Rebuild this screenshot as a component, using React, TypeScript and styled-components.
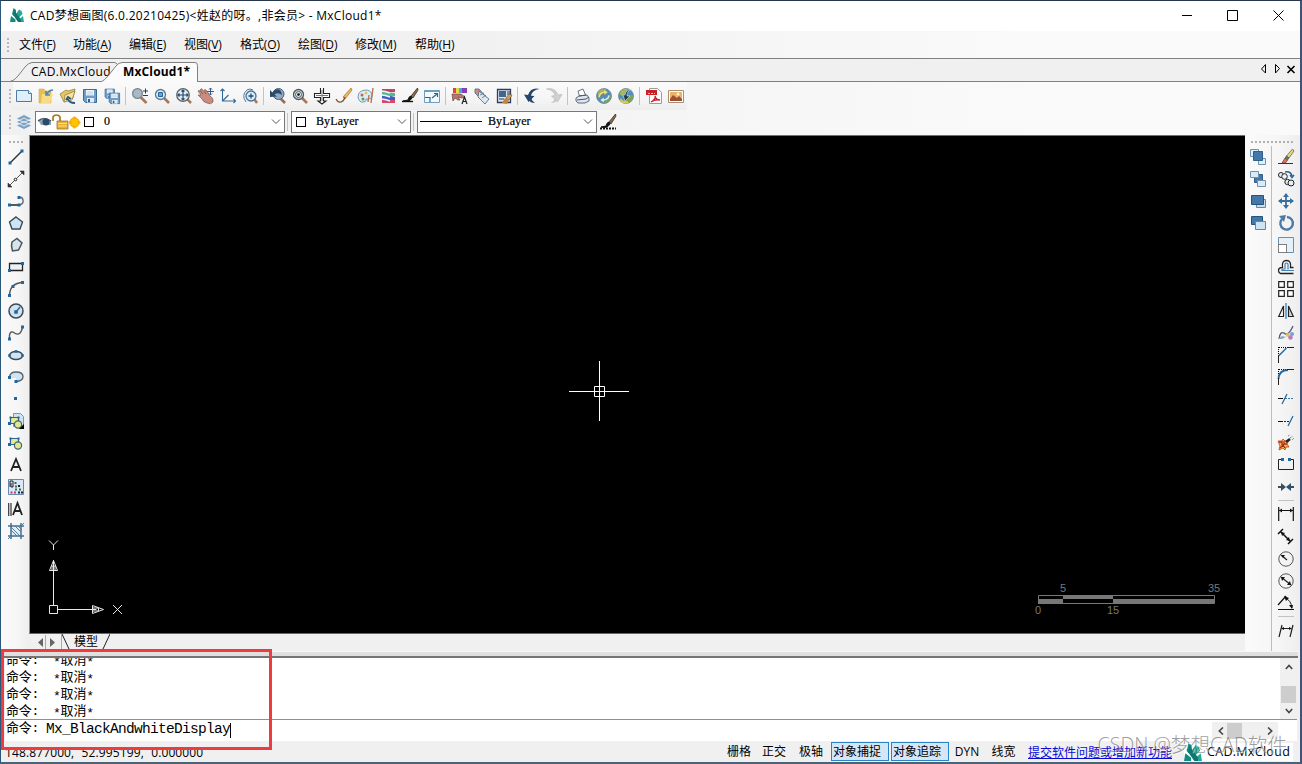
import React from "react";
import styled, { createGlobalStyle, css } from "styled-components";

const ui = `"Open Sans", "Noto Sans", "Noto Sans CJK SC", sans-serif`;
const cjk = `"Noto Sans", "Noto Sans CJK SC", sans-serif`;

const Global = createGlobalStyle`
  * { box-sizing: border-box; }
  body { margin: 0; overflow: hidden; background: #fff; }
`;

const Window = styled.div`
  position: relative;
  width: 1302px;
  height: 764px;
  display: flex;
  flex-direction: column;
  border: 1px solid #27374d;
  border-right: 2px solid #3f5277;
  border-left-color: #2b5878;
  border-bottom: 2px solid #4a6377;
  background: #f0f0f0;
  color: #000;
  font: 12px ${ui};
  overflow: hidden;
  white-space: nowrap;
`;

const TitleBar = styled.header`
  height: 30px;
  flex: none;
  display: flex;
  align-items: center;
  background: #fff;
  padding: 0 0 2px 9px;
`;
const Title = styled.h1<{ $track: number }>`
  margin: 0 auto 0 6px;
  font: 12px ${ui};
  letter-spacing: ${(p) => p.$track}px;
`;
const Caption = styled.button`
  width: 45.5px;
  height: 29px;
  border: 0;
  padding: 0;
  background: none;
  display: grid;
  place-items: center;
  svg { transform: translateX(1px); }
`;

const MenuBar = styled.nav`
  height: 27px;
  flex: none;
  display: flex;
  align-items: center;
  padding-left: 6px;
  background: linear-gradient(90deg, #f0f0f0, #f1f1f1 35%, #fafafa 80%);
`;
const MenuItem = styled.span<{ $w: number }>`
  width: ${(p) => p.$w}px;
  font: 12px ${ui};
  letter-spacing: -0.1px;
  padding-bottom: 1px;
  u { text-underline-offset: 2px; }
`;

const Grip = styled.span<{ $across?: boolean; $len: number }>`
  flex: none;
  ${(p) =>
    p.$across
      ? css`
          width: ${p.$len}px;
          height: 2px;
          background: repeating-linear-gradient(90deg, #b0b0b0 0 2px, transparent 2px 4px);
        `
      : css`
          width: 2px;
          height: ${p.$len}px;
          background: repeating-linear-gradient(180deg, #b8b8b8 0 2px, transparent 2px 4px);
        `}
`;

const TabStrip = styled.div`
  height: 24px;
  flex: none;
  display: flex;
  border-top: 1px solid #808080;
  background: #f0f0f0;
  box-shadow: inset 0 -1px #808080;
`;
const Tab = styled.div<{ $w: number; $pad: number; $overlap?: number; $active?: boolean }>`
  position: relative;
  width: ${(p) => p.$w}px;
  margin-left: ${(p) => p.$overlap ?? 0}px;
  padding: 4px 0 0 ${(p) => p.$pad}px;
  font: ${(p) => (p.$active ? "bold" : "normal")} 12px/17px ${ui};
  svg { position: absolute; left: 0; top: 0; }
  span { position: relative; letter-spacing: ${(p) => (p.$active ? 0.15 : 0.3)}px; }
`;
const TabControls = styled.div`
  margin-left: auto;
  padding: 2px 4px 0 0;
`;

const ToolRow = styled.div<{ $h: number; $lift?: number }>`
  height: ${(p) => p.$h}px;
  flex: none;
  display: flex;
  align-items: center;
  padding: 0 0 ${(p) => p.$lift ?? 0}px 8px;
  background: linear-gradient(90deg, #f1f1f1, #f4f4f4 45%, #fafafa 80%);
`;
const ToolSet = styled.div`
  display: flex;
  align-items: center;
  height: 100%;
  background: linear-gradient(180deg, #fafafa, #f5f5f5 60%, #ededed);
`;
const ToolButton = styled.button`
  width: 22px;
  height: 22px;
  flex: none;
  padding: 0;
  border: 0;
  background: none;
  display: grid;
  place-items: center;
  svg { display: block; overflow: visible; }
`;
const Divider = styled.i<{ $across?: boolean }>`
  flex: none;
  ${(p) =>
    p.$across
      ? "width:16px;height:1px;margin:2px 0 3px;"
      : "width:1px;height:18px;margin:0 3px 0 2px;"}
  background: #c3c3c3;
`;

const Combo = styled.div<{ $w: number }>`
  width: ${(p) => p.$w}px;
  height: 22px;
  flex: none;
  display: flex;
  align-items: center;
  border: 1px solid #777;
  background: #fff;
  padding: 0 3px 0 1px;
  font: 12px "Liberation Serif", serif;
  > svg:last-child { margin-left: auto; }
`;
const Swatch = styled.i<{ $gap: number }>`
  width: 10px;
  height: 10px;
  margin: 0 10px 0 ${(p) => p.$gap}px;
  border: 1px solid #000;
`;
const LinePreview = styled.i`
  width: 62px;
  height: 1px;
  margin: 0 6px 0 1px;
  background: #000;
`;
const Value = styled.span`
  letter-spacing: 0.1px;
  -webkit-text-stroke: 0.2px #000;
`;

const Main = styled.main`
  height: 516px;
  flex: none;
  display: flex;
`;
const SideBar = styled.aside<{ $w: number }>`
  width: ${(p) => p.$w}px;
  flex: none;
  display: flex;
  flex-direction: column;
  align-items: center;
  padding: 6px 0 0;
  background: linear-gradient(90deg, #fafafa, #f6f6f6 60%, #eee);
`;
const SideColumns = styled.div`
  display: flex;
  flex: 1;
  width: 100%;
`;
const Column = styled.div<{ $w: number; $line?: boolean }>`
  width: ${(p) => p.$w}px;
  display: flex;
  flex-direction: column;
  align-items: center;
  ${(p) => p.$line && "border-right:1px solid #bdbdbd;"}
`;
const Center = styled.section`
  flex: 1;
  display: flex;
  flex-direction: column;
`;
const Canvas = styled.div`
  height: 499px;
  position: relative;
  background: #000;
  border-top: 1px solid #707070;
  border-left: 1px solid #909090;
  border-bottom: 1px solid #686868;
`;
const Drawing = styled.svg<{ $x: number; $y: number }>`
  position: absolute;
  left: ${(p) => p.$x}px;
  top: ${(p) => p.$y}px;
  display: block;
  text { font: 11px "Liberation Sans", sans-serif; fill: #787878; }
`;
const SheetTabs = styled.div`
  height: 17px;
  display: flex;
  align-items: center;
  background: #f0f0f0;
  padding-left: 5px;
  font: 12px/15px ${cjk};
  span { padding-bottom: 2px; }
`;

const Splitter = styled.div`
  height: 7px;
  flex: none;
  margin: 0 2px 0 3px;
  background: #dfdfdf;
  border-top: 1px solid #f6f6f6;
  border-bottom: 2px solid #747474;
`;
const History = styled.div`
  height: 61px;
  flex: none;
  margin: 0 3px 0 4px;
  display: flex;
  background: #fff;
  overflow: hidden;
`;
const Lines = styled.div`
  flex: 1;
  margin-top: -6px;
  padding-left: 1px;
`;
const Line = styled.div`
  height: 17px;
  display: flex;
  font: 13px/17px "Liberation Mono", "Noto Sans CJK SC", monospace;
  letter-spacing: -0.2px;
`;
const Prompt = styled.span`
  width: 47px;
`;
const Star = styled.span`
  position: relative;
  top: 2px;
`;
const VScroll = styled.div`
  width: 17px;
  display: flex;
  flex-direction: column;
  align-items: center;
  justify-content: space-between;
  background: #f0f0f0;
  padding: 5px 0 4px;
`;
const Thumb = styled.i<{ $w: number; $h: number; $mt?: number }>`
  width: ${(p) => p.$w}px;
  height: ${(p) => p.$h}px;
  margin-top: ${(p) => p.$mt ?? 0}px;
  background: #cdcdcd;
`;
const CommandRow = styled.div`
  height: 22px;
  flex: none;
  margin: 0 3px 0 4px;
  display: flex;
  background: #fff;
  border-top: 1px solid #8f8f8f;
  padding-left: 1px;
`;
const CommandPrompt = styled.span`
  width: 40px;
  font: 13px/17px "Liberation Mono", "Noto Sans CJK SC", monospace;
  letter-spacing: -0.2px;
`;
const Command = styled.span`
  font: 14.5px/19px "Liberation Mono", monospace;
  letter-spacing: -0.7px;
`;
const Caret = styled.i`
  width: 1px;
  height: 15px;
  margin: 3px 0 0 0;
  background: #000;
`;
const HScroll = styled.div`
  width: 66px;
  height: 17px;
  margin: 2px 19px 0 auto;
  display: flex;
  align-items: center;
  padding: 0 5px;
  background: #f0f0f0;
`;

const StatusBar = styled.footer`
  flex: 1;
  display: flex;
  align-items: center;
  padding: 0 0 0 4px;
  font: 12px ${ui};
`;
const Coordinates = styled.span`
  width: 721px;
  letter-spacing: 0.12px;
  word-spacing: 4px;
  padding-top: 1px;
`;
const Toggle = styled.span<{ $w: number; $on?: boolean; $track?: number }>`
  width: ${(p) => p.$w}px;
  height: 19px;
  line-height: 17px;
  text-align: ${(p) => (p.$on ? "left" : "center")};
  padding-left: ${(p) => (p.$on ? 1 : 0)}px;
  letter-spacing: ${(p) => p.$track ?? 0}px;
  border: 1px solid ${(p) => (p.$on ? "#2a83c9" : "transparent")};
  background: ${(p) => (p.$on ? "#d5e7f6" : "transparent")};
  margin-right: ${(p) => (p.$on ? 2 : 0)}px;
`;
const Feedback = styled.a`
  margin-left: 4px;
  color: #0909d6;
  text-decoration: underline;
  text-underline-offset: 1px;
  width: 156px;
`;
const Brand = styled.span`
  display: flex;
  align-items: center;
  background: #fff;
  gap: 5px;
  padding-right: 3px;
  font-size: 12.5px;
  letter-spacing: 0.3px;
`;
const Highlight = styled.div`
  position: absolute;
  left: 0;
  top: 648px;
  width: 271px;
  height: 101px;
  border: 3px solid #ef3b3f;
`;
const Watermark = styled.div`
  position: absolute;
  right: 13px;
  bottom: 6px;
  font: 300 19.6px/23px "Open Sans", "Noto Sans CJK SC", sans-serif;
  color: rgba(110, 110, 110, 0.68);
  text-shadow: 1px 1px 0 rgba(255, 255, 255, 0.5);
`;

type P = { children: React.ReactNode; w?: number; h?: number };
const Icon = ({ children, w = 16, h = 16 }: P) => (
  <svg width={w} height={h} viewBox={`0 0 ${w} ${h}`} fill="none" stroke="#222" strokeWidth="1">
    {children}
  </svg>
);
const B = "#24669c";
const L = "#cfe3f3";
const Dots = ({ at, s = 3, c = B }: { at: number[][]; s?: number; c?: string }) => (
  <>
    {at.map(([x, y]) => (
      <rect key={`${x},${y}`} x={x - s / 2} y={y - s / 2} width={s} height={s} fill={c} stroke="none" />
    ))}
  </>
);
const Lens = ({ children, x = 6.5, y = 6.5, r = 5, c = "#5d7890" }: { children?: React.ReactNode; x?: number; y?: number; r?: number; c?: string }) => (
  <Icon>
    <path d={`M${x + r * 0.7} ${y + r * 0.7}L15 15`} stroke="#a9785b" strokeWidth="2.6" />
    <circle cx={x} cy={y} r={r} fill="#dcebf4" stroke={c} strokeWidth="1.3" />
    {children}
  </Icon>
);
const Logo = ({ s = 14 }: { s?: number }) => (
  <svg width={s} height={s} viewBox="0 0 14 14">
    <path d="M3.500 0 6 2v4L3.500 8 2 6zM1 8l4.500 3.500V14H0z" fill="#128b80" />
    <path d="M9 1.500 11.500 3l1 3-5 5L6 6zM13 8l1 6h-3.500L9 11.500z" fill="#20aa99" />
    <path d="m4 2 7 9.500V14H8L3.500 7.500z" fill="#0f776e" />
  </svg>
);
const Chevron = () => (
  <svg width="10" height="6" fill="none" stroke="#555">
    <path d="m1 .5 4 4 4-4" />
  </svg>
);
const Arrow = ({ d }: { d: "u" | "d" | "l" | "r" }) => (
  <svg width="8" height="8" fill="none" stroke="#444" strokeWidth="1.6">
    <path d={{ u: "m.8 6 3.2-3.5L7.2 6", d: "m.8 2 3.2 3.5L7.2 2", l: "M6 .5 2.3 4 6 7.5", r: "M2 .5 5.7 4 2 7.5" }[d]} />
  </svg>
);

const Floppy = ({ x = 0, y = 0, s = 1 }) => (
  <g transform={`translate(${x} ${y}) scale(${s})`}>
    <path d="M1.500 1.500h13v13h-11l-2-2z" fill="#6f9dc6" stroke="#356c9b" />
    <path d="M4 2h8v5.500H4z" fill="#eef5fb" stroke="none" />
    <path d="M5 4h6M5 6h6" stroke="#a9c4da" strokeWidth=".7" />
    <path d="M5 10h7v4.500H5z" fill="#e4edf5" stroke="none" />
    <path d="M6 11h2v3H6z" fill="#285f91" stroke="none" />
  </g>
);
const Globe = ({ flip }: { flip?: boolean }) => (
  <Icon>
    <circle cx="8" cy="8" r="7.500" fill="#4f8fbe" stroke="#6c8593" strokeWidth=".8" />
    <path d="M1.500 6Q4 0 10 1L7 5 4 8z" fill="#a8b95a" stroke="none" />
    <path d="M15 7q1 5-5 8l-5-1 4-3 3-4z" fill="#7ba457" stroke="none" />
    {flip ? (
      <>
        <path d="M3 10q2 4 6 3l2 2q-6 2-9-3z" fill="#e8c84f" stroke="none" />
        <path d="M14.500 1Q9 2 9 8h3l-5 5-2-6h2q1-6 7.500-6z" fill="#23384d" stroke="#e9eef2" strokeWidth=".6" />
      </>
    ) : (
      <>
        <path d="M2 9q0-5 6-6V1l4 3.500L8 7V5Q4 6 4 10z" fill="#f1dd7d" stroke="#8d8a52" strokeWidth=".5" />
        <path d="M14 7q0 5-6 6v2l-4-3 4-3v2q4-1 4-4z" fill="#d9ecf7" stroke="#577b90" strokeWidth=".5" />
      </>
    )}
  </Icon>
);
const Brush = ({ dots }: { dots?: boolean }) => (
  <Icon>
    <path d="m15.500 0-6.500 8 2 2 5-8z" fill="#866b4d" stroke="#3f332a" strokeWidth=".8" />
    <path d="M9 8q-2 0-3 4l-5 1q6 2 9-3z" fill="#161616" stroke="#161616" />
    <path d={dots ? "M0 14.500h16" : "M0 13.500h11"} stroke="#111" strokeWidth={dots ? 1.8 : 1.4} strokeDasharray={dots ? "2 1" : "none"} />
  </Icon>
);

const fileTools = [
  <Icon><path d="M.5 2.500h12l3 3v8H.5z" fill="#e0eef9" stroke="#4c7ca5" /><path d="M12.500 2.500v3h3" fill="#fff" stroke="#4c7ca5" /></Icon>,
  <Icon><path d="M1 1h5l1 2h6v12H1z" fill="#e9bd52" stroke="#d4a847" strokeWidth=".5" /><path d="M4 6h11l-3 9H3z" fill="#f7dc86" stroke="none" /><path d="M15 2q-4 0-6 4M8 3v4h4" stroke="#4c86b5" strokeWidth="1.6" /></Icon>,
  <Icon><path d="m0 6 6-4 2 1 7-2-2 9-9 4z" fill="#e6c75f" stroke="#8c7433" strokeWidth=".7" /><path d="m5 7 10-4-3 9-8 2z" fill="#f4e5a2" stroke="#8c7433" strokeWidth=".7" /><path d="M15 15q-6 0-7-4M6 12l2-3 3 2" stroke="#28587e" strokeWidth="1.8" /></Icon>,
  <Icon><Floppy /></Icon>,
  <Icon><Floppy s={0.72} /><Floppy x={4} y={4} s={0.8} /></Icon>,
];
const viewTools = [
  <Icon><path d="m8.500 9 6 6" stroke="#a9785b" strokeWidth="2.6" /><circle cx="5.500" cy="5.500" r="4.900" fill="#a9b9c5" stroke="#778895" strokeWidth="1.300" /><path d="M11 3h5M13.500.5v5M11 7.500h5" stroke="#263f57" /></Icon>,
  <Lens><path d="M4.500 4.500h4v4h-4z" fill="#6fa3cf" stroke={B} /></Lens>,
  <Lens x={7} y={7} r={6.3} c="#5b6168"><path d="M7 2v10M2 7h10M5.500 3.500 7 2l1.500 1.500M5.500 10.500 7 12l1.500-1.500M3.500 5.500 2 7l1.500 1.500M10.500 5.500 12 7l-1.500 1.500" stroke="#2e4a68" strokeWidth="1.200" /></Lens>,
  <Icon><path d="M0 3q1-1 2 0l3 3-3-4q1-2 2-1l4 5-2-4q2-1 3 1l3 5q4 2 3 6-2 3-6 1-4-1-5-4L0 7l3 0z" fill="#c98c80" stroke="#7e5951" strokeWidth=".7" /><path d="M12.500 0v7M9 3.500h7M11 1.500 12.500 0 14 1.500M11 5.500 12.500 7 14 5.500" stroke="#2f5d8c" /></Icon>,
  <Icon><path d="M2.500 1v12H16M.5 3l2-2 2 2M13.500 11l2 2-2 2M2.500 13l6-6" stroke="#356a97" strokeWidth="1.100" /></Icon>,
  <Lens x={9} y={8} r={5} c="#42749e"><path d="M6.500 8h5M9 5.500v5" stroke="#244d75" strokeWidth="1.300" /><path d="M5 2Q-1 7 4 14M5 2q3-2 6 0" stroke="#557892" /></Lens>,
];
const editTools = [
  <Icon><path d="m9 9 6 6" stroke="#9a6d52" strokeWidth="2.600" /><circle cx="8.500" cy="6" r="5.500" fill="#90abc0" stroke="#41607b" /><path d="M0 2v7l7-.5-2.500-2Q8 4 12 7 11 0 6 1.500 4 2 2.500 4.500z" fill="#2b4a6b" stroke="none" /></Icon>,
  <Lens c="#4d555c"><circle cx="6.500" cy="6.500" r="3" stroke="#555" /><circle cx="6.500" cy="6.500" r="1" fill="#222" /></Lens>,
  <Icon><path d="M6.500 0v5.500H.5v4h6V13H4l4 3 4-3H9.500V9.500h6v-4h-6V0" fill="#fff" stroke="#222" strokeWidth="1.100" /><path d="M8 2v11M2 7.500h12" stroke="#777" /></Icon>,
  <Icon><path d="m15 0-8 9 2 2 7-9z" fill="#f0b65d" stroke="#a36f38" strokeWidth=".7" /><path d="M0 11q2 4 5 3t4-5" stroke="#7d4f35" strokeWidth="1.200" /></Icon>,
  <Icon><path d="M9 2Q0 2 0 9q1 6 6 5 3-1 2-3 5 1 6-3 0-5-5-6z" fill="#deebf3" stroke="#6d9bbd" /><circle cx="4" cy="7" r="1.500" fill="#d65e50" stroke="none" /><circle cx="8" cy="5" r="1.300" fill="#e6bd3f" stroke="none" /><circle cx="5" cy="11" r="1.500" fill="#54a060" stroke="none" /><path d="m15 0-2 15M11 7l-1 7" stroke="#b87550" strokeWidth="1.400" /></Icon>,
  <Icon><path d="M2 1h13v3H2z" fill="#c54461" stroke="none" /><path d="M2 4q7 0 13 1v3H2z" fill="#5cb58c" stroke="none" /><path d="M2 8q7-1 13 1v3H2z" fill="#3b5fc0" stroke="none" /><path d="M2 12h13v3H2z" fill="#d8476a" stroke="none" /><path d="M1 3q4 0 9 2M1 7q4 0 9 2M1 11q4 0 9 2" stroke="#eef7ff" strokeWidth="1.500" /></Icon>,
  <Brush />,
  <Icon><path d="M.5 2.500h15v12H.5z" fill="#f4f9fc" stroke="#6e9fc1" /><path d="M.5 3.200h15" stroke="#6e9fc1" strokeWidth="1.600" /><path d="m8 10 5-4M10 5.500h3.500V9M1 9.500h5v4.500" stroke="#286998" strokeWidth="1.200" /></Icon>,
];
const matchTools = [
  <Icon><path d="M1 0h3v5H1z" fill="#e04141" stroke="none" /><path d="M4 0h3v5H4z" fill="#e5d94a" stroke="none" /><path d="M7 0h3v5H7z" fill="#4ba6da" stroke="none" /><path d="M10 0h5v5h-5z" fill="#873fb5" stroke="none" /><path d="m0 6 9 0 4 3-3 1-4-1 2 3-2 0-3-2-2 3z" fill="#b67770" stroke="#6b4540" strokeWidth=".7" /><path d="m10 16 2.500-7 2.500 7M11 13.500h3" stroke="#222" strokeWidth="1.200" /></Icon>,
  <Icon><path d="m1 1 4 0 8 9-4 3-8-8z" fill="#cb8d86" stroke="#4d6476" strokeWidth=".8" /><path d="m5 3 10 8-4 5-7-7z" fill="#dfe8ed" stroke="#47647b" strokeWidth=".8" /><path d="m6 7 4-2M8 10l4-3" stroke="#5a87a8" /></Icon>,
  <Icon><path d="M1.500 1.500h13v13h-13z" fill="#dce8f4" stroke="#2d3e60" strokeWidth="1.300" /><path d="M3 3h7v6H3z" fill="#42668c" stroke="none" /><path d="M11 4h3M11 6h3M3 11h5" stroke="#334" /><path d="m13 6 3 1-3 5-3-2z" fill="#d2a05e" stroke="#6d4e30" strokeWidth=".6" /><path d="m9 10 4 2-2 4-5-1z" fill="#c4823c" stroke="none" /></Icon>,
];
const undoTools = [
  <Icon><path d="M15.500 1Q7-1 4 7L0 6.500 4.500 14l6-6-3.500-.3Q8 2 15.500 1z" fill="#24466e" stroke="none" /><path d="M5 12q1 3 6 3-3-2-4-5z" fill="#24466e" stroke="none" /></Icon>,
  <Icon><path d="M.5 1Q9-1 12 7l4-.5L11.500 14l-6-6 3.500-.3Q8 2 .5 1z" fill="#d0d0d0" stroke="#b3b3b3" strokeWidth=".6" /><path d="M11 12q-1 3-6 3 3-2 4-5z" fill="#c8c8c8" stroke="none" /></Icon>,
];
const webTools = [
  <Icon><path d="m4 3 5-2 3 7-6 2z" fill="#fff" stroke="#52647b" strokeWidth=".9" /><path d="m2 10 3-2 8-1 2 3v3l-4 2H4l-2-2z" fill="#dfe5ed" stroke="#4b5b75" strokeWidth=".9" /><path d="m3 12 9-1 3-2M5 8l7-1" stroke="#4b5b75" /></Icon>,
  <Globe />,
  <Globe flip />,
];
const exportTools = [
  <Icon><path d="M3.500.5h8l4 4v11h-12z" fill="#fff" stroke="#9c9c9c" /><path d="M0 2h11v5H0z" fill="#c91f25" stroke="none" /><path d="M2 5.500h7" stroke="#f1b4b4" strokeWidth="1" strokeDasharray="2 1" /><path d="M5 14q5-3 4-6 1 4 5 4-5-1-9 2z" stroke="#c91f25" strokeWidth="1.300" /></Icon>,
  <Icon><path d="M.5 2.500h15v12H.5z" fill="#fff" stroke="#a88c78" /><path d="M2 4h12v9H2z" fill="#ebb26b" stroke="none" /><path d="m2 11 3-4 4 3 2-2 3 3v2H2z" fill="#9c5032" stroke="none" /><circle cx="10" cy="6" r="1.500" fill="#fff3bd" stroke="none" /></Icon>,
];

const Region = () => (
  <>
    <path d="M2.500 3.500h8v6h-8z" fill="#e8ec8b" stroke={B} strokeWidth="1.200" />
    <circle cx="10" cy="10.500" r="3.600" fill="#dde893" stroke="#48616f" strokeWidth="1.200" />
    <Dots at={[[1.500, 9.5]]} s={3} />
    <Dots at={[[2.5, 3.5], [10.5, 3.5]]} s={2} />
  </>
);
const drawTools = [
  <Icon><path d="m2 14 12-12" stroke="#333" strokeWidth="1.500" /><Dots at={[[2, 14], [14, 2]]} /></Icon>,
  <Icon><path d="m1 15 14-14" stroke="#555" /><path d="M0 16v-4l4 4zM16 0v4l-4-4z" fill="#333" stroke="#333" strokeWidth=".6" /><circle cx="7.500" cy="8.500" r="1.300" fill="#fff" /></Icon>,
  <Icon><path d="M2 12h9" stroke="#222" strokeWidth="1.500" /><path d="M11 12q5-1 4-5t-4-2" stroke="#667" strokeWidth="1.400" /><Dots at={[[1.5, 12], [11, 12], [11, 4.5]]} /></Icon>,
  <Icon><path d="m8 2 6.500 5-2.500 7H4L1.500 7z" fill={L} stroke="#3c4a54" strokeWidth="1.400" /></Icon>,
  <Icon><path d="m4 5 5-3.500 5 4.500-3.500 7-6 1-1-5z" fill="#d7e4eb" stroke="#4d565c" strokeWidth="1.500" /></Icon>,
  <Icon><path d="M1.500 4.500h13v7h-13z" fill="#eaf2f7" stroke="#222" strokeWidth="1.300" /><Dots at={[[1.5, 11.5], [14.5, 4.5]]} /></Icon>,
  <Icon><path d="M1.500 14Q2 2 15 1.500" stroke="#555" strokeWidth="1.400" /><Dots at={[[1.5, 14.5], [5, 5.5], [14.500, 1.5]]} /></Icon>,
  <Icon><circle cx="8" cy="8" r="7" fill={L} stroke="#3d4a54" strokeWidth="1.500" /><path d="m8 9 4-5" stroke={B} strokeWidth="1.300" /><Dots at={[[8, 9]]} s={3.5} /></Icon>,
  <Icon><path d="M1.500 14V10q1-5 5-2 6 4 8-6" stroke="#555" strokeWidth="1.400" /><Dots at={[[1.5, 14], [14.500, 2]]} /></Icon>,
  <Icon><ellipse cx="8" cy="8.500" rx="6.500" ry="4" fill={L} stroke="#3d4a54" strokeWidth="1.400" /><Dots at={[[1.5, 8.5], [14.500, 8.5], [8, 4.5]]} s={2.6} /></Icon>,
  <Icon><path d="M1.500 8Q2 3 8 3q7 0 7 4.500t-7 5V9H1.500z" fill={L} stroke="none" /><path d="M1.500 8Q2 3 8 3q7 0 7 4.500t-7 5" stroke="#59656d" strokeWidth="1.400" /><Dots at={[[1.5, 8.5], [8, 12.5]]} /></Icon>,
  <Icon><Dots at={[[7.5, 7.5]]} /></Icon>,
  <Icon><path d="M5.500.5h7l3 3v10h-10z" fill={L} stroke="#7396bd" /><g transform="translate(0 1)"><Region /></g><path d="m16 11v5h-5z" fill="#000" stroke="none" /></Icon>,
  <Icon><Region /></Icon>,
  <Icon><path d="m3 14 5-12 5 12M5 10h6" stroke="#222" strokeWidth="1.800" /></Icon>,
  <Icon><path d="M.5.500h15v15H.5z" fill="#dbe7f8" stroke="#6687b2" /><path d="M2 8V2h3v6H3V4" stroke="#222" /><Dots at={[[7.5, 4]]} s={2} c="#27754d" /><Dots at={[[8, 7.5], [8, 10.5], [12, 10.5]]} s={2} c="#277458" /><Dots at={[[3.5, 13.5], [7, 13.5]]} s={2} c="#c64141" /><Dots at={[[11, 7], [11, 13.5], [14, 13.5]]} s={2} c="#222" /></Icon>,
  <Icon><path d="M.7 2v13M3 2v13" stroke="#333" strokeWidth="1.200" /><path d="m5 14 4.500-12L14 14M6.500 10h6" stroke="#222" strokeWidth="1.800" /></Icon>,
  <Icon><path d="M3 0v16M13 0v16M0 3h16M0 13h16" stroke="#456d8d" strokeWidth="1.500" /><path d="M4 4h8v8H4z" fill="#e0eff6" stroke="none" /><path d="m3 7 6 6M3 4l9 9M7 3l6 6M10 3l4 4M0 16l3-3M13 3l3-3" stroke="#527f9d" /></Icon>,
];

const orderTools = [
  <Icon><path d="M.5.500h8v7h-8zM8.500 9.500h7v6h-7z" fill="#e0eef7" stroke="#6c94b2" /><path d="M3.500 2.500h9v9h-9z" fill="#4578aa" stroke="#315f8a" /></Icon>,
  <Icon><path d="M4.500 3.500h8v8h-8z" fill="#4578aa" stroke="#315f8a" /><path d="M.5.500h8v6h-8zM7.500 9.500h8v6h-8z" fill="#dceaf5" stroke="#6c94b2" /></Icon>,
  <Icon><path d="M6.500 6.500h9v8h-9z" fill="#c8dded" stroke="#6089aa" /><path d="M1.500 2.500h12v9h-12z" fill="#4578aa" stroke="#285379" /></Icon>,
  <Icon><path d="M1.500 1.500h11v8h-11z" fill="#4578aa" stroke="#285379" /><path d="M5.500 6.500h10v8h-10z" fill="#cfe4f3" stroke="#5b88ac" /></Icon>,
];
const modifyTools = [
  <Icon><path d="M0 14.500h15" stroke="#333" /><path d="m14.500 0-6 7 2.500 2 5-7z" fill="#ead582" stroke="#70643a" strokeWidth=".8" /><path d="m8.500 7-1.500 2 2.500 2L11 9z" fill="#4b8a68" stroke="#345" strokeWidth=".6" /><path d="m7 9 2.500 2-2 3H4z" fill="#e0705e" stroke="#77362d" strokeWidth=".7" /></Icon>,
  <Icon><circle cx="3" cy="4" r="2.500" fill="#edf3f6" /><circle cx="6.500" cy="5.500" r="2.800" fill="#edf3f6" /><circle cx="9.500" cy="11" r="2.700" fill="#e3eef4" /><circle cx="13" cy="12" r="3" fill="#e3eef4" /><path d="M7 1q6-1 7 4m-2-1 2 2.500 2-2.500" stroke={B} strokeWidth="1.500" /></Icon>,
  <Icon><path d="M8 1v14M1 8h14" stroke="#396f9e" strokeWidth="1.800" /><path d="m8 0 3 4H5zM8 16l-3-4h6zM0 8l4-3v6zM16 8l-4 3V5z" fill="#396f9e" stroke="none" /></Icon>,
  <Icon><path d="M4 4a6.300 6.300 0 1 0 5-2" stroke="#4b7ba5" strokeWidth="2.400" /><path d="m1 1 7-1-2 7z" fill="#4b7ba5" stroke="none" /></Icon>,
  <Icon><path d="M.5.500h15v15H.5z" fill="#e5f0f8" stroke="#6490b4" /><path d="M.5 7.500h8v8h-8z" fill="#fff" stroke="#fff" /><path d="M.5 7.500h8v8h-8z" stroke="#000" strokeDasharray="1 1" /></Icon>,
  <Icon><path d="M15.500 14.500H2.500q-2-1-2-3 0-3 4-3-1-7 4-7t4 7h3" stroke="#222" strokeWidth="1.300" /><path d="M16 11.500H4q-1-1 2-1.500h1V5q1.500-2 3 0v5.500" stroke="#4383b5" strokeWidth="1.200" /></Icon>,
  <Icon><path d="M.7.700h5.600v5.600H.7zM9.700.700h5.600v5.600H9.700zM.7 9.700h5.600v5.600H.7zM9.700 9.700h5.600v5.600H9.700z" fill="#fff" stroke="#222" strokeWidth="1.200" /></Icon>,
  <Icon><path d="M.7 13.500 5.500 3v10.500z" fill="#fff" strokeWidth="1.200" /><path d="m10.500 3 4.800 10.500h-4.800z" fill="#ccd8e4" strokeWidth="1.200" /><path d="M8 0v16" stroke="#2d83b8" strokeWidth="1.300" /></Icon>,
  <Icon><path d="M1 14q1-8 5-6 4 4 9-7" stroke="#557" strokeWidth="1.300" /><path d="m0 14 4-3 4 1-4 2z" fill="#88a8bd" stroke="none" /><circle cx="10" cy="10" r="2" fill="#e6c157" stroke="none" /><circle cx="14" cy="9" r="2" fill="#789fd6" stroke="none" /><circle cx="12.500" cy="12.500" r="2.300" fill="#b57bc6" stroke="none" /></Icon>,
  <Icon><path d="M1 .5h15M.5 0v10" stroke="#000" strokeDasharray="1 1" /><path d="m.5 9 8-8" stroke={B} strokeWidth="1.500" /><path d="M.5 9v7M9 .5h7" stroke="#222" /></Icon>,
  <Icon><path d="M1 .5h15M.5 0v10" stroke="#000" strokeDasharray="1 1" /><path d="M.5 10Q1 1 10 1" stroke={B} strokeWidth="1.900" /><path d="M.5 9v7M9 .5h7" stroke="#222" /></Icon>,
  <Icon><path d="M0 7.500h5" stroke="#111" /><path d="M7 7.500h9" stroke="#4375a2" strokeDasharray="2 1" /><path d="m4 13 5-10" stroke={B} strokeWidth="1.200" /></Icon>,
  <Icon><path d="M0 8.500h5" stroke="#111" /><path d="M6 8.500h6" stroke="#222" strokeDasharray="2 1" /><path d="m10 13 5-10" stroke={B} strokeWidth="1.200" /></Icon>,
  <Icon><path d="m0 6 4 0 1-2 2 2 4-1-2 4 2 3-3 0-1 3-2-2-4 2 1-4z" fill="#f4bd3a" stroke="#c9472e" strokeWidth=".9" /><path d="M1 7h3v3M6 6v3h3M2 13l3-3 2 3" stroke="#a33021" strokeWidth="1.300" /><path d="m8 7 4-3" stroke="#222" strokeWidth="2.600" /><path d="m12 3 3-2M14 5l2-2M10 1l2-1" stroke="#5177aa" strokeDasharray="1 .8" /></Icon>,
  <Icon><path d="M4 2.500H.5v10h15v-10H12" fill="none" stroke="#222" /><Dots at={[[4.500, 2.500], [11.500, 2.500]]} /></Icon>,
  <Icon><path d="M0 8h5M11 8h5" stroke="#111" strokeWidth="1.400" /><path d="m3 4 5 4-5 4zM13 4 8 8l5 4z" fill="#2d526e" stroke="none" /></Icon>,
];
const dimensionTools = [
  <Icon><path d="M.7 0v14M15.300 0v14M1 3.500h14" stroke="#111" strokeWidth="1.200" /><path d="m1 3.500 3-2v4zM15 3.500l-3-2v4z" fill="#111" stroke="none" /></Icon>,
  <Icon><path d="m0 5 5-5M10 15l5-5M3 3l9 9" stroke="#111" strokeWidth="1.500" /><path d="m3 3 4 1-3 3zM12 12l-4-1 3-3z" fill="#111" stroke="none" /></Icon>,
  <Icon><circle cx="8" cy="8" r="7.200" stroke="#555" /><path d="m3 4 6 5" strokeWidth="1.300" /><path d="m3 4 4 0-2 3z" fill="#111" stroke="none" /></Icon>,
  <Icon><circle cx="8" cy="8" r="7.200" stroke="#555" /><path d="m3 4 10 8" strokeWidth="1.300" /><path d="m3 4 4 0-3 4zM13 12l-4 0 3-4z" fill="#111" stroke="none" /></Icon>,
  <Icon><path d="M0 14.500h16M0 10l8-9" stroke="#111" strokeWidth="1.200" /><path d="M7 3q6 2 7 10" /><path d="m6 1 5 2-3 3zM14 14l-3-4h4z" fill="#111" stroke="none" /></Icon>,
];

const Tools = ({ icons }: { icons: React.ReactNode[] }) => (
  <>
    {icons.map((icon, i) => (
      <ToolButton key={i}>{icon}</ToolButton>
    ))}
  </>
);

const menus: [string, string, number][] = [
  ["文件", "F", 54],
  ["功能", "A", 56],
  ["编辑", "E", 55],
  ["视图", "V", 56],
  ["格式", "O", 58],
  ["绘图", "D", 57],
  ["修改", "M", 60],
  ["帮助", "H", 60],
];
const toolGroups = [fileTools, viewTools, editTools, matchTools, undoTools, webTools, exportTools];

export default function App() {
  return (
    <Window>
      <Global />
      <TitleBar>
        <Logo />
        <Title $track={0.27}>CAD梦想画图(6.0.20210425)&lt;姓赵的呀。,非会员&gt; - MxCloud1*</Title>
        <Caption><svg width="11" height="11" stroke="#000"><path d="M0 5.500h10" /></svg></Caption>
        <Caption><svg width="11" height="11" stroke="#000" fill="none"><path d="M.5.500h10v10H.5z" /></svg></Caption>
        <Caption><svg width="11" height="11" stroke="#000"><path d="m.5.500 10 10M10.500.5l-10 10" /></svg></Caption>
      </TitleBar>
      <MenuBar>
        <Grip $len={14} style={{ marginRight: 10 }} />
        {menus.map(([label, key, w]) => (
          <MenuItem key={key} $w={w}>{label}(<u>{key}</u>)</MenuItem>
        ))}
      </MenuBar>
      <TabStrip>
        <Tab $w={101} $pad={22} $overlap={8}>
          <svg width="112" height="23" fill="none" stroke="#808080"><path d="M1 22.500Q5 22 9 17L16 8q3-4 7-4.500h83l4 3" /></svg>
          <span>CAD.MxCloud</span>
        </Tab>
        <Tab $w={98} $pad={22} $overlap={-9} $active>
          <svg width="98" height="23"><path d="M0 23Q4 21 7 17l8-10q2-3 6-3.500h73q2.500 0 2.500 3V23" fill="#fbfbfb" stroke="#808080" /></svg>
          <span>MxCloud1*</span>
        </Tab>
        <TabControls>
          <svg width="38" height="16" fill="none" stroke="#000">
            <path d="m7.500 3.500-4 4.500 4 4zM17.500 3.500v8.500l4-4.500z" />
            <path d="m29.500 5 7 7M36.500 5l-7 7" strokeWidth="1.600" />
          </svg>
        </TabControls>
      </TabStrip>
      <ToolRow $h={28}>
        <Grip $len={14} style={{ marginRight: 2 }} />
        <ToolSet>
          {toolGroups.map((group, i) => (
            <React.Fragment key={i}>
              {i > 0 && <Divider />}
              <Tools icons={group} />
            </React.Fragment>
          ))}
        </ToolSet>
      </ToolRow>
      <ToolRow $h={25} $lift={2}>
        <Grip $len={14} style={{ marginRight: 2 }} />
        <ToolButton>
          <Icon><path d="m0 11.500 8-4 8 4-8 4zM0 8l8-4 8 4-8 4zM0 4.500l8-4 8 4-8 4z" fill="#7fa1c0" stroke="#f5f8fb" strokeWidth=".8" /></Icon>
        </ToolButton>
        <Combo $w={250}>
          <svg width="45" height="16" fill="none">
            <path d="M1 6q6-5 13 1v4H4z" fill="#8ca3b4" />
            <circle cx="9" cy="8" r="3.500" fill="#284c69" />
            <path d="M1 7q7-5 13 0" stroke="#385366" strokeWidth="1.200" />
            <path d="M16 7V3q1-2 3.500-2T23 3v5" stroke="#a47a25" strokeWidth="1.700" />
            <path d="M20 7h11v8H20z" fill="#e8af33" stroke="#9c7327" strokeWidth=".8" />
            <path d="M21 9.500h9M21 12h9" stroke="#ffe082" />
            <circle cx="37.500" cy="8.500" r="4.700" fill="#ffc400" stroke="#eca000" />
            <path d="M37.500 2.500v3M37.500 11.500v3M32 8.500h3M40.500 8.500h3" stroke="#f5b000" strokeWidth="2" />
          </svg>
          <Swatch $gap={2} />
          <Value>0</Value>
          <Chevron />
        </Combo>
        <Divider />
        <Combo $w={120}>
          <Swatch $gap={3} />
          <Value>ByLayer</Value>
          <Chevron />
        </Combo>
        <Divider />
        <Combo $w={180}>
          <LinePreview />
          <Value>ByLayer</Value>
          <Chevron />
        </Combo>
        <ToolButton><Brush dots /></ToolButton>
      </ToolRow>
      <Main>
        <SideBar $w={28}>
          <Grip $across $len={14} style={{ margin: "0 0 3px 2px" }} />
          <Column $w={22} style={{ marginLeft: 2 }}>
            <Tools icons={drawTools} />
          </Column>
        </SideBar>
        <Center>
          <Canvas>
            <Drawing $x={539} $y={225} width="61" height="61" stroke="#fff" fill="none">
              <path d="M30.500 0v60M0 30.500h60M25.500 25.500h10v10h-10z" />
            </Drawing>
            <Drawing $x={18} $y={404} width="76" height="76" stroke="#e8e8e8" fill="none">
              <path d="M1 .5l4.500 4.500 4.500-4.500M5.500 5v5M5.500 66V20M1.500 30.500l4-10 4 10zM4 30V26h3v4M1.500 65.500h8v8h-8zM9.500 69.500h39M44.500 65.500l11 4-11 4zM44.500 68h6v3h-6M65 65l9 9M74 65l-9 9" />
            </Drawing>
            <Drawing $x={1000} $y={446} width="190" height="36">
              <path d="M8.500 13.500h176v8h-176z" fill="#000" stroke="#777" />
              <path d="M8 17h25v5H8zM83 17h101v5H83z" fill="#777" />
              <path d="M33 13h50v4H33z" fill="#777" />
              <text x="30" y="10">5</text>
              <text x="178" y="10">35</text>
              <text x="5" y="32">0</text>
              <text x="77" y="32">15</text>
            </Drawing>
          </Canvas>
          <SheetTabs>
            <svg width="40" height="17" fill="none" stroke="#222">
              <path d="m9 4-5 4.500L9 13zM16 4v9l5-4.500z" fill="#666" stroke="none" />
              <path d="M11.500 1v15M27.500 1v15" stroke="#aaa" />
              <path d="m28 0 7 15" />
            </svg>
            <span>模型</span>
            <svg width="12" height="17" fill="none" stroke="#222"><path d="m12 0-7 15" /></svg>
          </SheetTabs>
        </Center>
        <SideBar $w={55}>
          <Grip $across $len={43} style={{ marginBottom: 3 }} />
          <SideColumns>
            <Column $w={27} $line>
              <Tools icons={orderTools} />
            </Column>
            <Column $w={28}>
              <Tools icons={modifyTools} />
              <Divider $across />
              <Tools icons={dimensionTools} />
              <Divider $across />
              <ToolButton>
                <Icon><path d="M1 14 4 2M12 14l3-12M4 5.500h9" stroke="#222" strokeWidth="1.200" /><path d="m3 5.500 3-1.500v3zM14 5.500l-3-1.500v3z" fill="#111" stroke="none" /></Icon>
              </ToolButton>
            </Column>
          </SideColumns>
        </SideBar>
      </Main>
      <Splitter />
      <History>
        <Lines>
          {[0, 1, 2, 3].map((n) => (
            <Line key={n}><Prompt>命令:</Prompt><span><Star>*</Star>取消<Star>*</Star></span></Line>
          ))}
        </Lines>
        <VScroll>
          <Arrow d="u" />
          <Thumb $w={15} $h={17} $mt={10} />
          <Arrow d="d" />
        </VScroll>
      </History>
      <CommandRow>
        <CommandPrompt>命令:</CommandPrompt>
        <Command>Mx_BlackAndwhiteDisplay</Command>
        <Caret />
        <HScroll>
          <Arrow d="l" />
          <Thumb $w={16} $h={16} style={{ margin: "0 24px 0 3px" }} />
          <Arrow d="r" />
        </HScroll>
      </CommandRow>
      <StatusBar>
        <Coordinates>148.877000, 52.995199, 0.000000</Coordinates>
        <Toggle $w={24}>栅格</Toggle>
        <Toggle $w={48}>正交</Toggle>
        <Toggle $w={24}>极轴</Toggle>
        <Toggle $w={58} $on style={{ marginLeft: 9 }}>对象捕捉</Toggle>
        <Toggle $w={58} $on>对象追踪</Toggle>
        <Toggle $w={32}>DYN</Toggle>
        <Toggle $w={41}>线宽</Toggle>
        <Feedback>提交软件问题或增加新功能</Feedback>
        <Brand><Logo s={18} />CAD.MxCloud</Brand>
      </StatusBar>
      <Highlight />
      <Watermark>CSDN @梦想CAD软件</Watermark>
    </Window>
  );
}
